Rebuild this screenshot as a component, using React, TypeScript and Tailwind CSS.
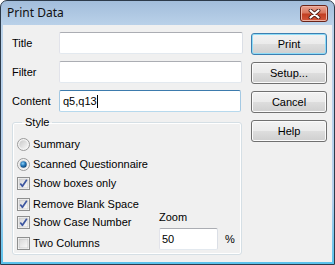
import React from "react";

const Radio = ({ checked }: { checked?: boolean }) => (
  <svg width="13" height="13" viewBox="0 0 13 13" className="shrink-0">
    <defs>
      <linearGradient id={checked ? "rgA" : "rgB"} x1="0" y1="0" x2="1" y2="1">
        <stop offset="0" stopColor="#c8c8c8" />
        <stop offset="1" stopColor="#f8f8f8" />
      </linearGradient>
      <radialGradient id="dot" cx="0.4" cy="0.35" r="0.7">
        <stop offset="0" stopColor="#8fd3f7" />
        <stop offset="0.5" stopColor="#2479bc" />
        <stop offset="1" stopColor="#0c3d6b" />
      </radialGradient>
    </defs>
    <circle cx="6.5" cy="6.5" r="6" fill="#f4f4f4" stroke="#9a9a9a" strokeWidth="1" />
    <circle cx="6.5" cy="6.5" r="4.3" fill={`url(#${checked ? "rgA" : "rgB"})`} />
    {checked && <circle cx="6.5" cy="6.5" r="3.2" fill="url(#dot)" />}
  </svg>
);

const Check = ({ checked }: { checked?: boolean }) => (
  <svg width="13" height="13" viewBox="0 0 13 13" className="shrink-0">
    <defs>
      <linearGradient id="cbg" x1="0" y1="0" x2="1" y2="1">
        <stop offset="0" stopColor="#d6d6d6" />
        <stop offset="1" stopColor="#fbfbfb" />
      </linearGradient>
    </defs>
    <rect x="0.5" y="0.5" width="12" height="12" fill="#fff" stroke="#8e8f8f" />
    <rect x="2" y="2" width="9" height="9" fill="url(#cbg)" stroke="#b8b8b8" strokeWidth="0.6" />
    {checked && (
      <path d="M3.3 6.4 L5.4 9.3 L9.8 2.8" fill="none" stroke="#3d56a0" strokeWidth="1.7" strokeLinejoin="round" />
    )}
  </svg>
);

const Btn = ({ label, def }: { label: string; def?: boolean }) => (
  <div
    className={
      "h-[22px] w-[76px] rounded-[3px] border flex items-center justify-center text-[11px] text-black bg-[linear-gradient(#f2f2f2_0%,#ebebeb_48%,#dddddd_52%,#cfcfcf_100%)] " +
      (def
        ? "border-[#3c7fb1] shadow-[inset_0_0_0_1px_#8fdcf7]"
        : "border-[#707070] shadow-[inset_0_0_0_1px_#fbfbfb]")
    }
  >
    {label}
  </div>
);

const Field = ({ w, focused, value }: { w: string; focused?: boolean; value?: string }) => (
  <div
    className={
      "h-[22px] bg-white border rounded-[2px] flex items-center pl-[3px] text-[11px] text-black " +
      w +
      (focused
        ? " border-t-[#3d7bad] border-l-[#a4c9e3] border-r-[#a4c9e3] border-b-[#b7d9ed]"
        : " border-t-[#abadb3] border-l-[#e2e3ea] border-r-[#dbdfe6] border-b-[#e3e9ef]")
    }
  >
    {value}
    {focused && <span className="inline-block w-px h-[13px] bg-black" />}
  </div>
);

export default function App() {
  return (
    <div
      className="w-[335px] h-[265px] rounded-t-[7px] border border-[#2c3a4a] bg-[linear-gradient(#a2bddb_0%,#bcd3ea_10%,#b3cfec_75%,#58c2ec_100%)] flex flex-col"
      style={{ fontFamily: '"Liberation Sans", Arial, sans-serif' }}
    >
      <div className="h-[24px] flex items-start shrink-0">
        <div
          className="pl-[6px] pt-[4px] text-[12px] leading-[15px] text-[#101010]"
          style={{ fontFamily: '"Noto Sans", "Open Sans", sans-serif' }}
        >
          Print Data
        </div>
        <div className="ml-auto mr-[6px] mt-[4px] w-[28px] h-[17px] rounded-[3px] border border-[#6b2418] bg-[linear-gradient(#e9a391_0%,#d9775e_45%,#c23f22_55%,#d2573c_100%)] shadow-[inset_0_0_0_1px_#eeb3a4] flex items-center justify-center">
          <svg width="13" height="10" viewBox="0 0 13 10">
            <path d="M2.5 1.5 L10.5 8.5 M10.5 1.5 L2.5 8.5" stroke="#4a1a12" strokeWidth="3.8" strokeLinecap="round" />
            <path d="M2.5 1.5 L10.5 8.5 M10.5 1.5 L2.5 8.5" stroke="#ffffff" strokeWidth="2.2" strokeLinecap="round" />
          </svg>
        </div>
      </div>
      <div className="flex-1 mx-[2px] mb-[2px] bg-[#f0f0f0] flex pl-[9px]">
        <div className="w-[239px] flex flex-col pt-[7px]">
          <div className="flex flex-col gap-[7px]">
            <div className="flex items-center">
              <div className="w-[47px] text-[11px] text-black">Title</div>
              <Field w="w-[184px]" />
            </div>
            <div className="flex items-center">
              <div className="w-[47px] text-[11px] text-black">Filter</div>
              <Field w="w-[183px]" />
            </div>
            <div className="flex items-center">
              <div className="w-[47px] text-[11px] text-black">Content</div>
              <Field w="w-[182px]" focused value="q5,q13" />
            </div>
          </div>
          <fieldset className="mt-[4px] w-[230px] h-[139px] border border-[#d5dfe5] rounded-[3px] shadow-[inset_0_0_0_1px_#ffffff] pl-[4px] pb-[3px] flex flex-col">
            <legend className="ml-[5px] px-[3px] text-[11px] leading-[13px] text-black">Style</legend>
            <div className="flex">
              <div className="w-[142px] flex flex-col text-[11px] text-black">
                <div className="h-[16px] mt-[7px] flex items-center gap-[3px]">
                  <Radio />
                  <span>Summary</span>
                </div>
                <div className="h-[16px] mt-[4px] flex items-center gap-[3px]">
                  <Radio checked />
                  <span>Scanned Questionnaire</span>
                </div>
                <div className="h-[16px] mt-[3px] flex items-center gap-[3px]">
                  <Check checked />
                  <span>Show boxes only</span>
                </div>
                <div className="h-[16px] mt-[5px] flex items-center gap-[3px]">
                  <Check checked />
                  <span>Remove Blank Space</span>
                </div>
                <div className="h-[16px] mt-[2px] flex items-center gap-[3px]">
                  <Check checked />
                  <span>Show Case Number</span>
                </div>
                <div className="h-[16px] mt-[5px] flex items-center gap-[3px]">
                  <Check />
                  <span>Two Columns</span>
                </div>
              </div>
              <div className="self-end flex flex-col text-[11px] text-black">
                <div className="leading-[13px]">Zoom</div>
                <div className="mt-[4px] mb-[1px] flex items-center">
                  <div className="w-[59px] h-[22px] bg-white border border-t-[#abadb3] border-l-[#e2e3ea] border-r-[#dbdfe6] border-b-[#e3e9ef] rounded-[2px] flex items-center pl-[2px]">
                    50
                  </div>
                  <span className="ml-[7px]">%</span>
                </div>
              </div>
            </div>
          </fieldset>
        </div>
        <div className="flex flex-col gap-[7px] pt-[8px]">
          <Btn label="Print" def />
          <Btn label="Setup..." />
          <Btn label="Cancel" />
          <Btn label="Help" />
        </div>
      </div>
    </div>
  );
}
